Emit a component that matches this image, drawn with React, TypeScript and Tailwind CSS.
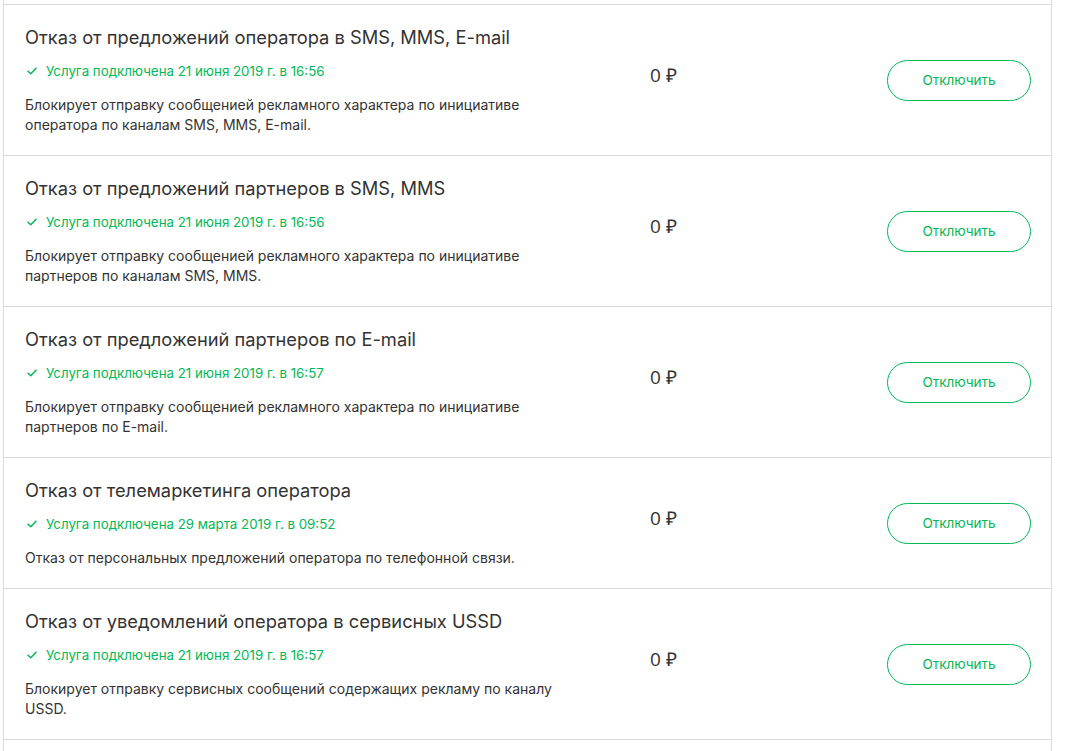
import React from "react";

type Item = { title: string; status: string; desc: string };

const items: Item[] = [
  {
    title: "Отказ от предложений оператора в SMS, MMS, E-mail",
    status: "Услуга подключена 21 июня 2019 г. в 16:56",
    desc: "Блокирует отправку сообщенией рекламного характера по инициативе оператора по каналам SMS, MMS, E-mail.",
  },
  {
    title: "Отказ от предложений партнеров в SMS, MMS",
    status: "Услуга подключена 21 июня 2019 г. в 16:56",
    desc: "Блокирует отправку сообщенией рекламного характера по инициативе партнеров по каналам SMS, MMS.",
  },
  {
    title: "Отказ от предложений партнеров по E-mail",
    status: "Услуга подключена 21 июня 2019 г. в 16:57",
    desc: "Блокирует отправку сообщенией рекламного характера по инициативе партнеров по E-mail.",
  },
  {
    title: "Отказ от телемаркетинга оператора",
    status: "Услуга подключена 29 марта 2019 г. в 09:52",
    desc: "Отказ от персональных предложений оператора по телефонной связи.",
  },
  {
    title: "Отказ от уведомлений оператора в сервисных USSD",
    status: "Услуга подключена 21 июня 2019 г. в 16:57",
    desc: "Блокирует отправку сервисных сообщений содержащих рекламу по каналу USSD.",
  },
];

function Check() {
  return (
    <svg width="10" height="8" viewBox="0 0 10 8" fill="none" className="shrink-0">
      <path d="M1 4.2 L3.8 6.8 L9 1.2" stroke="#00b956" strokeWidth="1.5" strokeLinecap="round" strokeLinejoin="round" />
    </svg>
  );
}

function Row({ item }: { item: Item }) {
  return (
    <div className="flex items-center border-t border-[#dadada] pl-[21px] pr-[20px]">
      <div className="w-[625px] shrink-0 pt-[20px] pb-[20px]">
        <div className="text-[18.3px] leading-[24px] text-[#333333]">{item.title}</div>
        <div className="mt-[12px] flex items-center gap-[9px] pl-[2px] text-[13.3px] leading-[20px] text-[#00b956]">
          <Check />
          <span>{item.status}</span>
        </div>
        <div className="mt-[14px] max-w-[530px] text-[14px] leading-[20px] text-[#333333]">{item.desc}</div>
      </div>
      <div
        className="flex-1 pb-[10px] text-[19px] leading-[24px] text-[#333333]"
        style={{ fontFamily: "'Open Sans', sans-serif" }}
      >
        0 ₽
      </div>
      <button className="h-[41px] w-[144px] shrink-0 rounded-full border border-[#00b956] bg-white text-[13.5px] text-[#00b956]">
        Отключить
      </button>
    </div>
  );
}

export default function App() {
  return (
    <div className="min-h-screen bg-white" style={{ fontFamily: "Inter, 'Noto Sans', sans-serif" }}>
      <div className="ml-[3px] w-[1049px] border-x border-[#dadada] pt-[4px] pb-[40px]">
        <div className="border-b border-[#dadada]">
          {items.map((it, i) => (
            <Row key={i} item={it} />
          ))}
        </div>
      </div>
    </div>
  );
}
